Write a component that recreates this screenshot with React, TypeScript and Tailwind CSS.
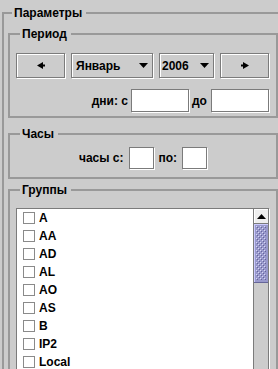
const groups = ["A", "AA", "AD", "AL", "AO", "AS", "B", "IP2", "Local"];

function ArrowLeft() {
  return (
    <svg width="8" height="7" viewBox="0 0 8 7" className="block">
      <polygon points="0,3.5 6,0 6,7" fill="#000" />
      <rect x="6" y="2.5" width="2" height="2" fill="#000" />
    </svg>
  );
}

function ArrowRight() {
  return (
    <svg width="8" height="7" viewBox="0 0 8 7" className="block">
      <polygon points="8,3.5 2,0 2,7" fill="#000" />
      <rect x="0" y="2.5" width="2" height="2" fill="#000" />
    </svg>
  );
}

function ArrowDown() {
  return (
    <svg width="9" height="5" viewBox="0 0 9 5" className="block">
      <polygon points="0,0 9,0 4.5,5" fill="#000" />
    </svg>
  );
}

function Bumps() {
  return (
    <svg width="100%" height="100%" className="block">
      <defs>
        <pattern id="bumps" width="4" height="4" patternUnits="userSpaceOnUse">
          <rect x="0" y="0" width="1" height="1" fill="#d8d8f4" />
          <rect x="1" y="1" width="1" height="1" fill="#666699" />
          <rect x="2" y="2" width="1" height="1" fill="#d8d8f4" />
          <rect x="3" y="3" width="1" height="1" fill="#666699" />
        </pattern>
      </defs>
      <rect x="2" y="2" width="calc(100% - 4px)" height="calc(100% - 4px)" fill="url(#bumps)" />
    </svg>
  );
}

export default function App() {
  return (
    <div className="h-[369px] w-[278px] overflow-hidden bg-[#cccccc] font-['Liberation_Sans',Arial,sans-serif] text-[12px] font-bold text-black">
      <div className="w-[290px] pl-[2px] pt-[6px]">
        <fieldset className="w-[282px] border-2 border-[#999999] px-[4px] pb-[4px]">
          <legend className="ml-[4px] pl-[2px] pr-[4px] leading-[14px]">Параметры</legend>

          <fieldset className="mt-[7px] border-2 border-[#999999] px-[6px] pb-[4px]">
            <legend className="ml-[4px] pl-[2px] pr-[4px] leading-[14px]">Период</legend>
            <div className="mt-[12px] flex h-[25px] gap-[6px]">
              <div className="flex w-[49px] items-center justify-center border border-[#7b7b7b] shadow-[inset_1px_1px_0_#fff,1px_1px_0_#fff]">
                <ArrowLeft />
              </div>
              <div className="flex w-[82px] items-center justify-between border border-[#7b7b7b] pl-[4px] pr-[4px] shadow-[inset_1px_1px_0_#fff,1px_1px_0_#fff]">
                <span>Январь</span>
                <ArrowDown />
              </div>
              <div className="flex w-[55px] items-center justify-between border border-[#7b7b7b] pl-[2px] pr-[4px] shadow-[inset_1px_1px_0_#fff,1px_1px_0_#fff]">
                <span>2006</span>
                <ArrowDown />
              </div>
              <div className="flex w-[49px] items-center justify-center border border-[#7b7b7b] shadow-[inset_1px_1px_0_#fff,1px_1px_0_#fff]">
                <ArrowRight />
              </div>
            </div>
            <div className="mt-[11px] flex h-[23px] items-center justify-end pr-[1px]">
              <span className="mr-[3px]">дни: с</span>
              <div className="h-[23px] w-[58px] border border-[#7b7b7b] bg-white shadow-[1px_1px_0_#fff]" />
              <span className="w-[22px] pl-[3px]">до</span>
              <div className="h-[23px] w-[58px] border border-[#7b7b7b] bg-white shadow-[1px_1px_0_#fff]" />
            </div>
          </fieldset>

          <fieldset className="mt-[9px] border-2 border-[#999999] px-[6px] pb-[8px]">
            <legend className="ml-[4px] pl-[2px] pr-[4px] leading-[14px]">Часы</legend>
            <div className="mt-[6px] flex h-[22px] items-center justify-center">
              <span className="mr-[5px]">часы с:</span>
              <div className="h-[22px] w-[25px] border border-[#7b7b7b] bg-white shadow-[1px_1px_0_#fff]" />
              <span className="ml-[5px] mr-[5px]">по:</span>
              <div className="h-[22px] w-[25px] border border-[#7b7b7b] bg-white shadow-[1px_1px_0_#fff]" />
            </div>
          </fieldset>

          <fieldset className="mt-[4px] border-2 border-[#999999] px-[6px] pb-[6px]">
            <legend className="ml-[4px] pl-[2px] pr-[4px] leading-[14px]">Группы</legend>
            <div className="mt-[11px] flex h-[200px] w-[253px] border border-[#7b7b7b] shadow-[1px_1px_0_#fff]">
              <ul className="flex-1 bg-white pl-[6px]">
                {groups.map((g) => (
                  <li key={g} className="flex h-[18px] items-center">
                    <span className="h-[12px] w-[12px] border border-[#8a8a8a] shadow-[inset_1px_1px_0_#fff,1px_1px_0_#fff]" />
                    <span className="ml-[4px]">{g}</span>
                  </li>
                ))}
              </ul>
              <div className="flex w-[15px] flex-col border-l border-[#7b7b7b] bg-[#cccccc]">
                <div className="flex h-[15px] items-center justify-center border-b border-[#7b7b7b] bg-[#eeeeee] shadow-[inset_1px_1px_0_#fff]">
                  <svg width="9" height="5" viewBox="0 0 9 5" className="block">
                    <polygon points="0,5 9,5 4.5,0" fill="#000" />
                  </svg>
                </div>
                <div className="h-[59px] border-b border-[#666699] bg-[#9999cc] shadow-[inset_1px_1px_0_#ccccff]">
                  <Bumps />
                </div>
              </div>
            </div>
          </fieldset>
        </fieldset>
      </div>
    </div>
  );
}
